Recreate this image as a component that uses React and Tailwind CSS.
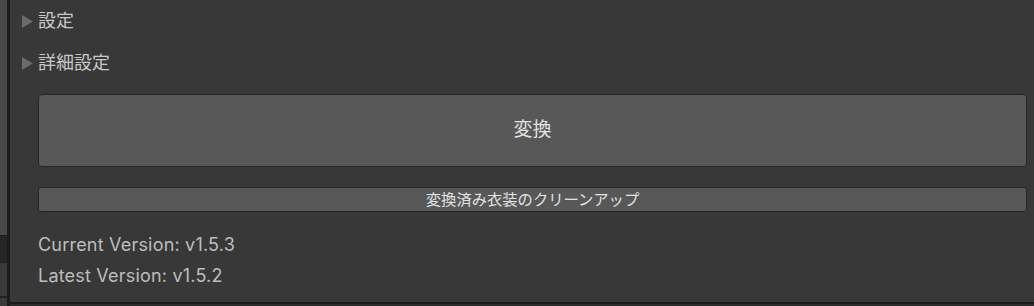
import React from "react";

const font = { fontFamily: "Inter, 'Noto Sans CJK JP', sans-serif" };

function Foldout({ label }) {
  return (
    <div className="flex h-[42px] items-center gap-[5px] pl-[12px]">
      <svg width="11" height="13" viewBox="0 0 11 13" className="shrink-0">
        <polygon points="0,0 11,6.5 0,13" fill="#6b6b6b" />
      </svg>
      <span className="text-[18px] leading-none text-[#c8c8c8]">{label}</span>
    </div>
  );
}

export default function App() {
  return (
    <div className="flex h-[306px] w-[1034px] overflow-hidden bg-[#2c2c2c]" style={font}>
      <div className="flex w-[7px] shrink-0 flex-col bg-[#3a3a3a]">
        <div className="h-[235px] rounded-br-[2px] bg-[#484848]" />
        <div className="h-[28px] border-y border-[#1f1f1f] bg-[#262626]" />
        <div className="h-[33px]" />
        <div className="h-[2px] bg-[#222222]" />
      </div>
      <div className="w-[3px] shrink-0 bg-[#1b1b1b]" />
      <div className="flex flex-1 flex-col">
        <div className="flex h-[302px] flex-col bg-[#383838]">
          <div>
            <Foldout label="設定" />
            <Foldout label="詳細設定" />
          </div>
          <div className="mr-[7px] ml-[28px] mt-[10px] flex flex-col">
            <button className="flex h-[73px] items-center justify-center rounded-[4px] border border-[#262626] bg-[#585858] text-[19px] text-[#e2e2e2]">
              変換
            </button>
            <button className="mt-[20px] flex h-[25px] items-center justify-center rounded-[3px] border border-[#262626] bg-[#585858] text-[15.3px] leading-none text-[#e2e2e2]">
              変換済み衣装のクリーンアップ
            </button>
            <div className="mt-[21px] flex flex-col gap-[8px] text-[18px] leading-[23px] tracking-[0.2px] text-[#bdbdbd]">
              <div>Current Version: v1.5.3</div>
              <div>Latest Version: v1.5.2</div>
            </div>
          </div>
        </div>
        <div className="h-[2px] bg-[#1c1c1c]" />
      </div>
    </div>
  );
}
